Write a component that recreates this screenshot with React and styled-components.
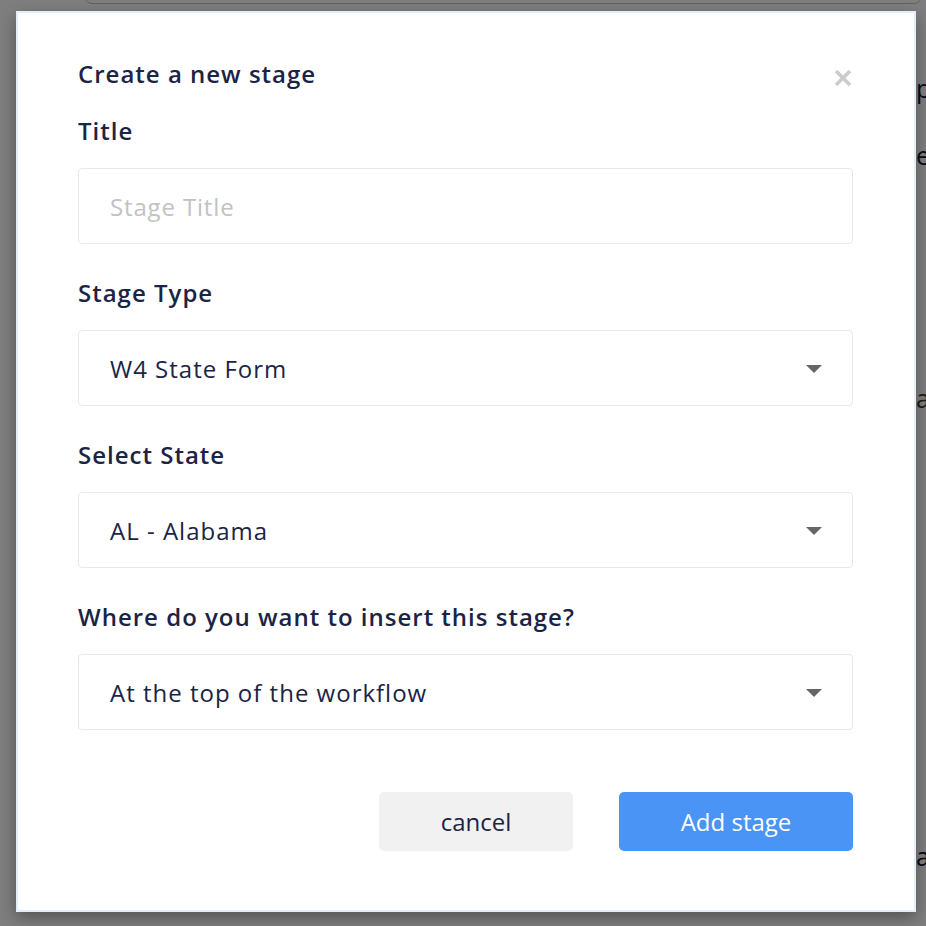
import React from "react";
import styled, { createGlobalStyle } from "styled-components";

const GlobalStyle = createGlobalStyle`
  html, body {
    margin: 0;
    padding: 0;
    width: 926px;
    height: 926px;
    overflow: hidden;
    font-family: "Open Sans", "Noto Sans", sans-serif;
  }
`;

const Page = styled.div`
  position: relative;
  width: 926px;
  height: 926px;
  background: #ffffff;
  overflow: hidden;
`;

const BackCard = styled.div`
  box-sizing: border-box;
  margin: -20px 0 0 84px;
  width: 838px;
  height: 24px;
  border: 1px solid #c4c4c4;
  border-radius: 8px;
`;

const BackColumn = styled.div`
  margin-left: 916px;
  display: flex;
  flex-direction: column;
  font-size: 25px;
  white-space: nowrap;
`;

const BackWord = styled.span`
  margin-top: ${(p) => p.$top}px;
  color: ${(p) => p.$color || "#0d1430"};
  line-height: 32px;
`;

const Overlay = styled.div`
  position: absolute;
  inset: 0;
  background: rgba(0, 0, 0, 0.5);
  display: flex;
  align-items: flex-start;
  justify-content: flex-start;
  padding: 11px 0 0 16px;
  box-sizing: border-box;
`;

const Modal = styled.div`
  width: 900px;
  height: 901px;
  box-sizing: border-box;
  background: #ffffff;
  border: 2px solid #e4eefb;
  box-shadow: 0 6px 16px rgba(0, 0, 0, 0.35);
  padding: 45px 61px 0 60px;
  display: flex;
  flex-direction: column;
  color: #1b2445;
`;

const Header = styled.div`
  display: flex;
  justify-content: space-between;
  align-items: flex-start;
`;

const Heading = styled.h2`
  margin: 0;
  font-size: 24px;
  font-weight: 600;
  line-height: 32px;
  letter-spacing: 1px;
`;

const Close = styled.button`
  border: none;
  background: none;
  padding: 0;
  margin: 10px 0 0 0;
  width: 20px;
  height: 20px;
  cursor: pointer;
  display: flex;
`;

const Label = styled.label`
  display: block;
  font-size: 24px;
  font-weight: 600;
  line-height: 32px;
  letter-spacing: 1px;
  margin-top: ${(p) => (p.$first ? 25 : 33)}px;
  margin-bottom: 21px;
`;

const Field = styled.div`
  height: 76px;
  box-sizing: border-box;
  border: 1px solid #e8e8e8;
  border-radius: 4px;
  display: flex;
  align-items: center;
  justify-content: space-between;
  padding: 0 30px 0 31px;
  font-size: 24px;
  letter-spacing: ${(p) => (p.$placeholder ? 0.85 : 1)}px;
  color: ${(p) => (p.$placeholder ? "#c2c2c2" : "#1b2445")};
`;

const Caret = styled.span`
  width: 0;
  height: 0;
  border-left: 8px solid transparent;
  border-right: 8px solid transparent;
  border-top: 8px solid #666666;
  margin-top: 1px;
`;

const Actions = styled.div`
  display: flex;
  justify-content: flex-end;
  gap: 46px;
  margin-top: 62px;
`;

const Button = styled.button`
  height: 59px;
  width: ${(p) => p.$width}px;
  border: none;
  border-radius: 5px;
  font-family: inherit;
  font-size: 24px;
  background: ${(p) => (p.$primary ? "#4a94f5" : "#f1f1f1")};
  color: ${(p) => (p.$primary ? "#ffffff" : "#1b2445")};
  cursor: pointer;
`;

function Select({ value }) {
  return (
    <Field>
      <span>{value}</span>
      <Caret />
    </Field>
  );
}

export default function App() {
  return (
    <>
      <GlobalStyle />
      <Page>
        <BackCard />
        <BackColumn>
          <BackWord $top={68}>pipeline</BackWord>
          <BackWord $top={35}>etc</BackWord>
          <BackWord $top={211} $color="#3a3a3a">age</BackWord>
          <BackWord $top={426}>all</BackWord>
        </BackColumn>
        <Overlay>
          <Modal>
            <Header>
              <Heading>Create a new stage</Heading>
              <Close aria-label="close">
                <svg width="20" height="20" viewBox="0 0 20 20">
                  <path
                    d="M3 3 L17 17 M17 3 L3 17"
                    stroke="#cccccc"
                    strokeWidth="3.6"
                    strokeLinecap="butt"
                  />
                </svg>
              </Close>
            </Header>
            <Label $first>Title</Label>
            <Field $placeholder>Stage Title</Field>
            <Label>Stage Type</Label>
            <Select value="W4 State Form" />
            <Label>Select State</Label>
            <Select value="AL - Alabama" />
            <Label>Where do you want to insert this stage?</Label>
            <Select value="At the top of the workflow" />
            <Actions>
              <Button $width={194}>cancel</Button>
              <Button $width={234} $primary>
                Add stage
              </Button>
            </Actions>
          </Modal>
        </Overlay>
      </Page>
    </>
  );
}
